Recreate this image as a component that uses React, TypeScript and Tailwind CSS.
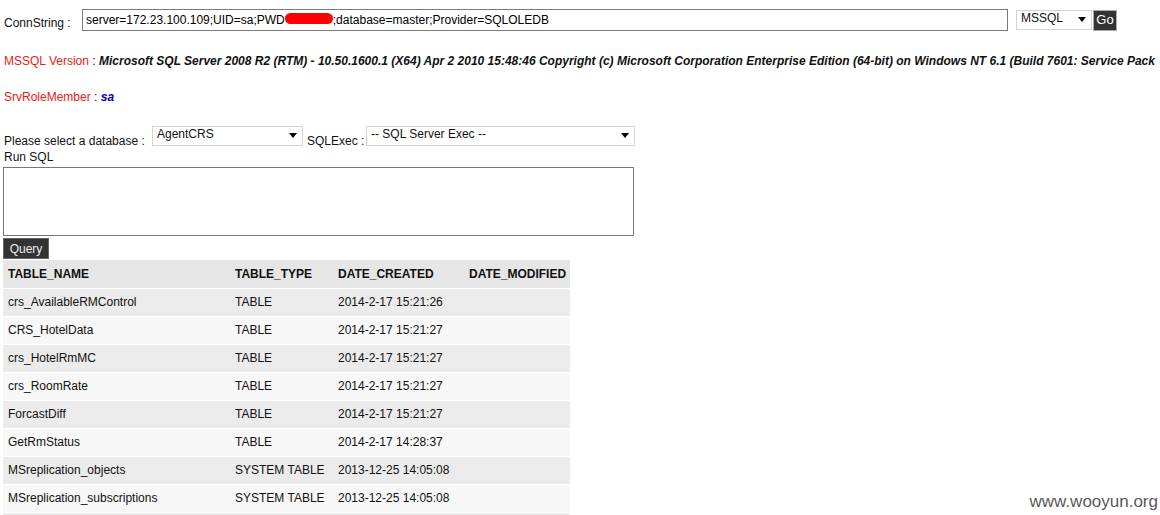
import React from 'react';

const rows = [
  ['crs_AvailableRMControl', 'TABLE', '2014-2-17 15:21:26'],
  ['CRS_HotelData', 'TABLE', '2014-2-17 15:21:27'],
  ['crs_HotelRmMC', 'TABLE', '2014-2-17 15:21:27'],
  ['crs_RoomRate', 'TABLE', '2014-2-17 15:21:27'],
  ['ForcastDiff', 'TABLE', '2014-2-17 15:21:27'],
  ['GetRmStatus', 'TABLE', '2014-2-17 14:28:37'],
  ['MSreplication_objects', 'SYSTEM TABLE', '2013-12-25 14:05:08'],
  ['MSreplication_subscriptions', 'SYSTEM TABLE', '2013-12-25 14:05:08'],
];

const Arrow = () => (
  <svg width="8" height="5" viewBox="0 0 8 5" className="shrink-0">
    <path d="M0 0h8L4 5z" fill="#000" />
  </svg>
);

const Select = ({ value, className }: { value: string; className: string }) => (
  <div
    className={`flex h-[20px] items-start justify-between border border-[#d4d4d4] bg-white pl-[4px] pr-[5px] ${className}`}
  >
    <span className="leading-[15px]">{value}</span>
    <div className="pt-[6px]">
      <Arrow />
    </div>
  </div>
);

export default function App() {
  return (
    <div className="relative h-[515px] w-[1160px] overflow-hidden bg-white font-['Liberation_Sans',Arial,sans-serif] text-[12px] text-[#111]">
      {/* conn string */}
      <div className="mt-[9px] flex h-[22px] items-center pl-[4px]">
        <span className="w-[78px] pt-[5px]">ConnString :</span>
        <div className="flex h-[22px] w-[926px] items-center border border-[#7a7a7a] pl-[3px] text-[#000]">
          <span>server=172.23.100.109;UID=sa;PWD</span>
          <span className="relative inline-block w-[48px]">
            <span className="invisible">xxxxxxxx</span>
            <span className="absolute left-0 top-[2px] h-[11px] w-[48px] rounded-[6px] bg-[#ff0000]" />
          </span>
          <span>;database=master;Provider=SQLOLEDB</span>
        </div>
        <Select value="MSSQL" className="ml-[8px] w-[76px]" />
        <button className="ml-[1px] flex h-[21px] w-[24px] items-center justify-center border border-[#aaa] bg-[#333] text-[13px] text-white">
          Go
        </button>
      </div>

      {/* version */}
      <div className="mt-[22px] overflow-hidden whitespace-nowrap pl-[4px] leading-[16px]">
        <span className="text-[#e41b17]">MSSQL Version</span>
        <span> : </span>
        <span className="font-bold italic">
          Microsoft SQL Server 2008 R2 (RTM) - 10.50.1600.1 (X64) Apr 2 2010 15:48:46 Copyright (c) Microsoft Corporation Enterprise Edition (64-bit) on Windows NT 6.1 (Build 7601: Service Pack
        </span>
      </div>

      <div className="mt-[20px] pl-[4px] leading-[16px]">
        <span className="text-[#e41b17]">SrvRoleMember</span>
        <span> : </span>
        <span className="font-bold italic text-[#0000cc]">sa</span>
      </div>

      {/* db select */}
      <div className="mt-[21px] flex h-[20px] items-end pl-[4px]">
        <span className="-mb-[3px] w-[148px] leading-[15px]">Please select a database :</span>
        <Select value="AgentCRS" className="w-[151px]" />
        <span className="-mb-[3px] ml-[4px] w-[59px] leading-[15px]">SQLExec :</span>
        <Select value="-- SQL Server Exec --" className="w-[269px]" />
      </div>

      <div className="mt-[3px] pl-[4px] leading-[16px]">Run SQL</div>
      <div className="mt-[2px] pl-[3px]">
        <textarea className="block h-[69px] w-[631px] resize-none border border-[#777] outline-none" />
      </div>
      <div className="mt-[2px] pl-[3px]">
        <button className="block h-[21px] w-[46px] border border-[#666] bg-[#333] text-[12px] text-[#eee]">Query</button>
      </div>

      {/* results */}
      <table className="ml-[3px] mt-[1px] w-[567px] border-collapse">
        <thead>
          <tr className="h-[28px] border-b border-white bg-[#e6e6e6] text-left font-bold">
            <th className="w-[227px] pl-[5px]">TABLE_NAME</th>
            <th className="w-[103px] pl-[5px]">TABLE_TYPE</th>
            <th className="w-[131px] pl-[5px]">DATE_CREATED</th>
            <th className="pl-[5px]">DATE_MODIFIED</th>
          </tr>
        </thead>
        <tbody>
          {rows.map((r, i) => (
            <tr
              key={r[0]}
              className={`h-[28px] border-b border-white ${i % 2 === 0 ? 'bg-[#ebebeb]' : 'bg-[#f7f7f7]'}`}
            >
              <td className="pl-[5px]">{r[0]}</td>
              <td className="pl-[5px]">{r[1]}</td>
              <td className="pl-[5px]">{r[2]}</td>
              <td className="pl-[5px]"></td>
            </tr>
          ))}
          <tr className="h-[28px] bg-[#ebebeb]">
            <td colSpan={4}></td>
          </tr>
        </tbody>
      </table>

      {/* watermark */}
      <div className="absolute bottom-[1px] right-[2px] text-[17px] text-[#5a5a5a]">www.wooyun.org</div>
    </div>
  );
}
